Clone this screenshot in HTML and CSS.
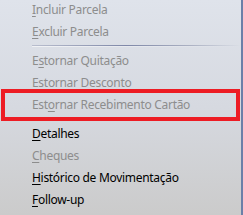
FILE: index.html
```html
<!DOCTYPE html>
<html>
<head>
<meta charset="utf-8">
<link rel="stylesheet" href="styles.css">
</head>
<body>
<div class="menu">
  <div class="item disabled"><u>I</u>ncluir Parcela</div>
  <div class="item disabled"><u>E</u>xcluir Parcela</div>
  <div class="sep"></div>
  <div class="item disabled">E<u>s</u>tornar Quitação</div>
  <div class="item disabled">Es<u>t</u>ornar Desconto</div>
  <div class="item disabled highlight">Est<u>o</u>rnar Recebimento Cartão</div>
  <div class="sep"></div>
  <div class="item"><u>D</u>etalhes</div>
  <div class="item disabled"><u>C</u>heques</div>
  <div class="item"><u>H</u>istórico de Movimentação</div>
  <div class="item"><u>F</u>ollow-up</div>
  <div class="redbox"></div>
</div>
</body>
</html>
```
FILE: styles.css
```css
html, body {
  margin: 0;
  padding: 0;
}
body {
  width: 243px;
  height: 215px;
  overflow: hidden;
}
.menu {
  position: relative;
  box-sizing: border-box;
  width: 243px;
  height: 215px;
  border-right: 2px solid #6b7fa8;
  background: linear-gradient(to bottom, #dfe3eb 0%, #d6d9e0 50%, #cbcbcb 100%);
  display: flex;
  flex-direction: column;
  padding-top: 0;
  font-family: "Noto Sans", "Open Sans", sans-serif;
  font-size: 12px;
  letter-spacing: -0.3px;
}
.item {
  height: 22px;
  line-height: 19px;
  padding-left: 32px;
  color: #000;
  white-space: nowrap;
}
.item u {
  text-decoration: underline;
  text-underline-offset: 2px;
}
.item.disabled {
  color: #8d8d8d;
}
.sep {
  height: 7px;
  margin-left: 32px;
  position: relative;
}
.sep::before {
  content: "";
  display: block;
  margin-top: 1px;
  height: 1px;
  background: linear-gradient(to right, #b9bece 0%, #7f88a8 45%, #aab0c2 75%, rgba(210,214,224,0) 100%);
}
.sep::after {
  content: "";
  display: block;
  height: 1px;
  background: linear-gradient(to right, rgba(255,255,255,0.6), rgba(255,255,255,0));
}
.redbox {
  position: absolute;
  left: 1px;
  top: 89px;
  width: 239px;
  height: 32px;
  box-sizing: border-box;
  border: 4px solid #ed1c24;
}
```
